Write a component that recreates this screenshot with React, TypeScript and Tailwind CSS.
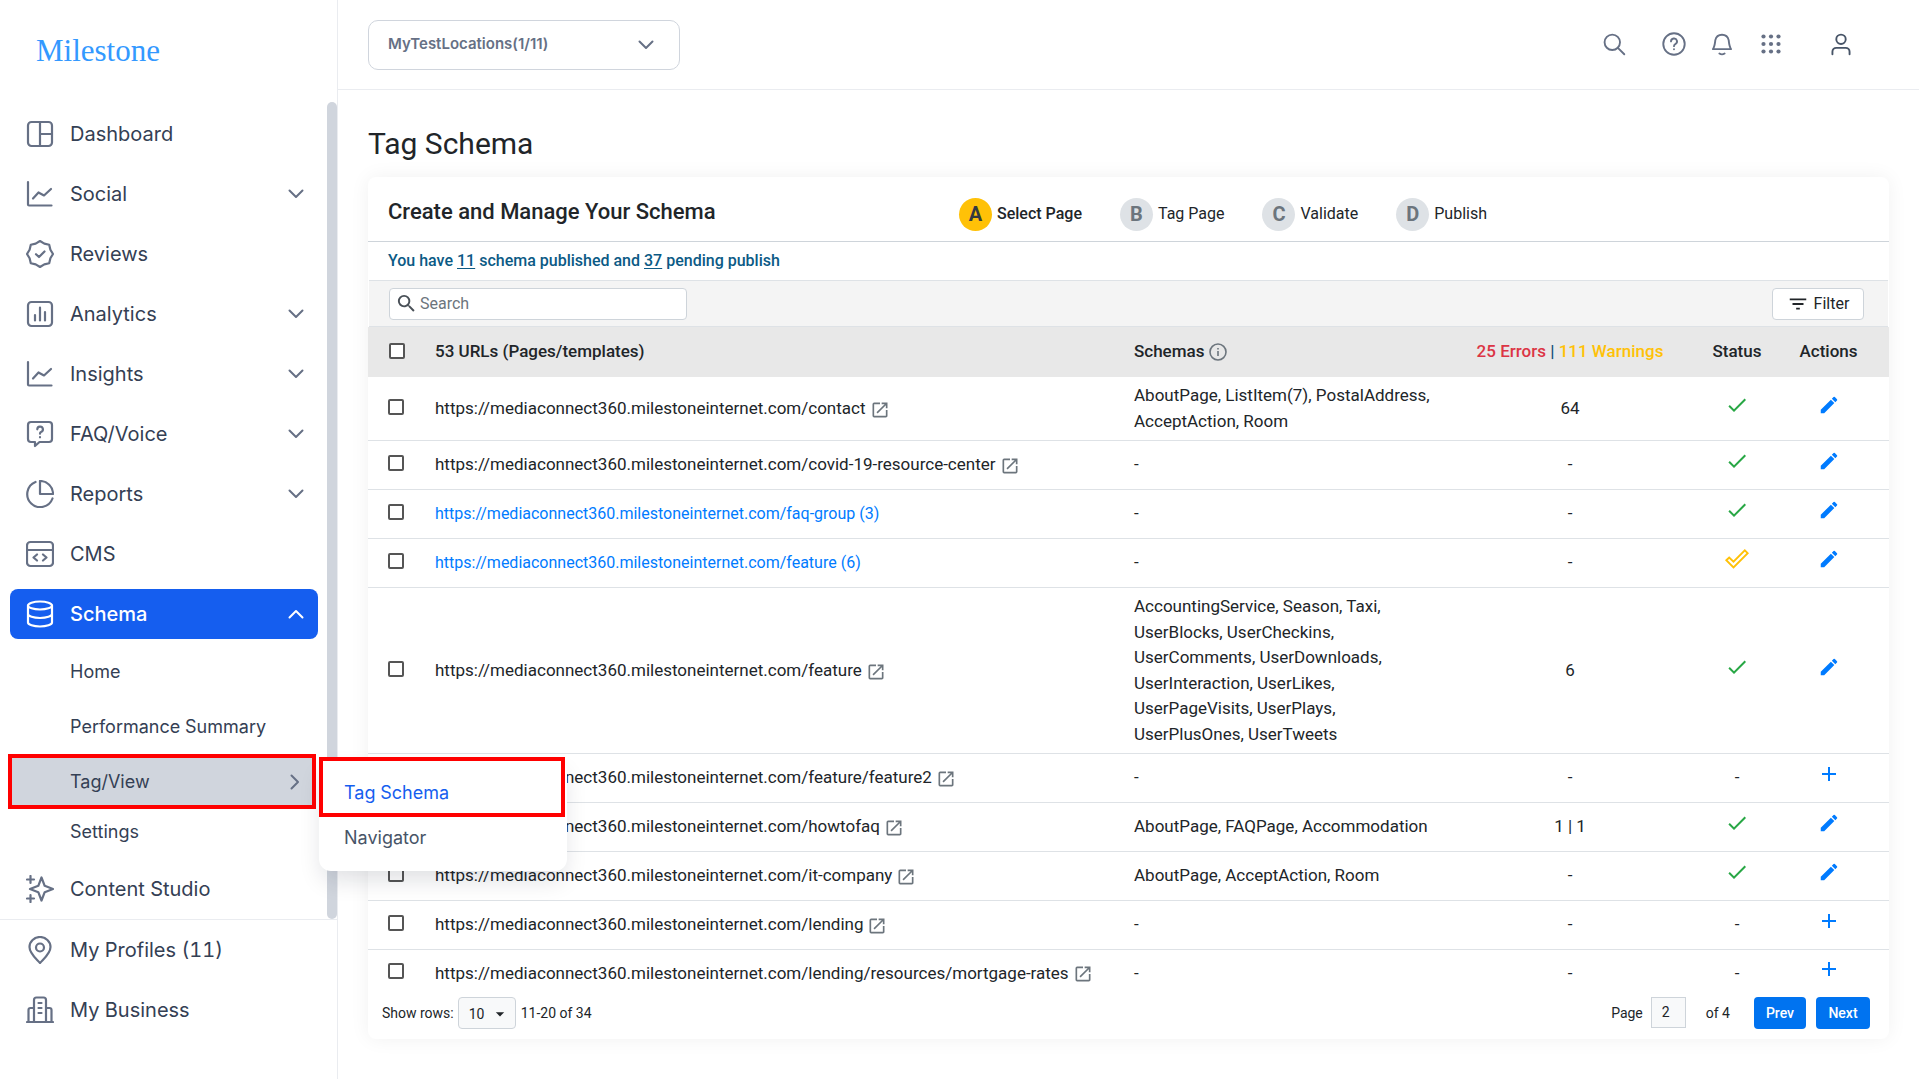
import { useState } from "react";
import type { ReactNode } from "react";
import {
  MdCheck,
  MdEdit,
  MdFilterList,
  MdOpenInNew,
  MdSearch,
  MdAdd,
  MdArrowDropDown,
} from "react-icons/md";

type navItemType = {
  title: string;
  icon: ReactNode;
  expandable?: boolean;
};

type statusType = "PUBLISHED" | "PENDING" | "NONE";

type rowType = {
  url: string;
  count?: number;
  schemas?: string;
  issues?: string;
  status: statusType;
};

const SITE_ADDRESS = "https://mediaconnect360.milestoneinternet.com/";

const StrokeIcon = ({ children, size = "size-7" }: { children: ReactNode; size?: string }) => (
  <svg
    viewBox="0 0 28 28"
    className={`${size} shrink-0`}
    fill="none"
    stroke="currentColor"
    strokeWidth="2.2"
    strokeLinecap="round"
    strokeLinejoin="round"
    aria-hidden="true"
  >
    {children}
  </svg>
);

const chartIcon = (
  <StrokeIcon>
    <path d="M2 2v22.500a1 1 0 0 0 1 1h22.500M7 18.500l5.500-6 5.500 3L25 9" />
  </StrokeIcon>
);

const navItems: navItemType[] = [
  {
    title: "Dashboard",
    icon: (
      <StrokeIcon>
        <rect x="2" y="2" width="24" height="24" rx="3.500" />
        <path d="M14 2v24M14 14h12" />
      </StrokeIcon>
    ),
  },
  { title: "Social", icon: chartIcon, expandable: true },
  {
    title: "Reviews",
    icon: (
      <StrokeIcon>
        <path d="M14 1l4.300 2.600 4.900 1.200 1.200 4.900L27 14l-2.600 4.300-1.200 4.900-4.900 1.200L14 27l-4.300-2.600-4.900-1.200-1.200-4.900L1 14l2.600-4.300 1.200-4.900 4.900-1.200z" />
        <path d="M10 14.200l3 2.800 5.500-5.500" />
      </StrokeIcon>
    ),
  },
  {
    title: "Analytics",
    icon: (
      <StrokeIcon>
        <rect x="2" y="2" width="24" height="24" rx="3.500" />
        <path d="M9 15v5.500M14 7.500v13M19 12v8.500" />
      </StrokeIcon>
    ),
    expandable: true,
  },
  { title: "Insights", icon: chartIcon, expandable: true },
  {
    title: "FAQ/Voice",
    icon: (
      <StrokeIcon>
        <path d="M5 2h18a3 3 0 0 1 3 3v14a3 3 0 0 1-3 3H13.500L9 26v-4H5a3 3 0 0 1-3-3V5a3 3 0 0 1 3-3z" />
        <path d="M11.300 9.300a2.800 2.800 0 1 1 3.700 2.700c-.700.300-1 .700-1 1.700M14 17.200v.100" />
      </StrokeIcon>
    ),
    expandable: true,
  },
  {
    title: "Reports",
    icon: (
      <StrokeIcon>
        <path d="M9.500 2a13 13 0 1 0 17 16.500" />
        <path d="M14 1a13 13 0 0 1 13 13H14z" />
      </StrokeIcon>
    ),
    expandable: true,
  },
  {
    title: "CMS",
    icon: (
      <StrokeIcon>
        <rect x="1" y="2" width="26" height="24" rx="3.500" />
        <path d="M1 10h26M11 14.500l-3.500 3 3.500 3M17 14.500l3.500 3-3.500 3" />
      </StrokeIcon>
    ),
  },
];

const rows: rowType[] = [
  {
    url: "contact",
    schemas: "AboutPage, ListItem(7), PostalAddress, AcceptAction, Room",
    issues: "64",
    status: "PUBLISHED",
  },
  { url: "covid-19-resource-center", status: "PUBLISHED" },
  { url: "faq-group", count: 3, status: "PUBLISHED" },
  { url: "feature", count: 6, status: "PENDING" },
  {
    url: "feature",
    schemas:
      "AccountingService, Season, Taxi, UserBlocks, UserCheckins, UserComments, UserDownloads, UserInteraction, UserLikes, UserPageVisits, UserPlays, UserPlusOnes, UserTweets",
    issues: "6",
    status: "PUBLISHED",
  },
  { url: "feature/feature2", status: "NONE" },
  {
    url: "howtofaq",
    schemas: "AboutPage, FAQPage, Accommodation",
    issues: "1 | 1",
    status: "PUBLISHED",
  },
  {
    url: "it-company",
    schemas: "AboutPage, AcceptAction, Room",
    status: "PUBLISHED",
  },
  { url: "lending", status: "NONE" },
  { url: "lending/resources/mortgage-rates", status: "NONE" },
];

const steps = [
  { letter: "A", title: "Select Page" },
  { letter: "B", title: "Tag Page" },
  { letter: "C", title: "Validate" },
  { letter: "D", title: "Publish" },
];

const Chevron = ({ className = "" }: { className?: string }) => (
  <svg
    viewBox="0 0 16 16"
    className={`size-4 ${className}`}
    fill="none"
    stroke="currentColor"
    strokeWidth="2"
    strokeLinecap="round"
    strokeLinejoin="round"
    aria-hidden="true"
  >
    <path d="M1.500 4.500L8 11l6.500-6.500" />
  </svg>
);

const Logo = () => (
  <a
    href="#"
    className="ml-9 text-[31px] leading-[44px] text-[#3399ff] font-['Liberation_Serif',serif]"
  >
    Milestone
  </a>
);

const NavLink = ({ title, icon, expandable }: navItemType) => (
  <li>
    <a
      href="#"
      className="flex h-[50px] items-center rounded-lg pl-4 pr-[14px] text-[#344054]"
    >
      <span className="text-[#667085]">{icon}</span>
      <span className="ml-4 flex-1">{title}</span>
      {expandable && <Chevron className="text-[#667085]" />}
    </a>
  </li>
);

const TagViewMenu = () => (
  <div className="absolute left-full top-0 z-10 ml-[3px] mt-[3px] w-[248px] rounded-xl bg-white pb-3 shadow-[0_12px_24px_-4px_rgba(16,24,40,0.14)]">
    <a
      href="#"
      className="flex h-[60px] w-[246px] items-end border-4 border-[#ff0000] pb-[6px] pl-[21px] leading-7 text-[#155eef]"
    >
      Tag Schema
    </a>
    <a href="#" className="flex h-[42px] items-center pl-[25px] text-[#475467]">
      Navigator
    </a>
  </div>
);

const Sidebar = () => (
  <aside className="flex w-[338px] shrink-0 flex-col border-r border-[#eaecf0] text-xl tabular-nums font-['Inter',sans-serif]">
    <div className="flex h-[102px] items-center">
      <Logo />
    </div>
    <div className="flex border-b border-[#eaecf0]">
      <nav className="flex-1 pb-[5px] pl-[10px] pr-[9px] pt-[7px]">
        <ul className="flex flex-col gap-[10px]">
          {navItems.map((data) => (
            <NavLink key={data.title} {...data} />
          ))}
          <li>
            <a
              href="#"
              className="flex h-[50px] items-center rounded-lg bg-[#155eef] pl-4 pr-[14px] font-medium text-white"
            >
              <StrokeIcon>
                <ellipse cx="14" cy="5.500" rx="12" ry="4" />
                <path d="M2 5.500v17c0 2.200 5.400 4 12 4s12-1.800 12-4v-17M2 14c0 2.200 5.400 4 12 4s12-1.800 12-4" />
              </StrokeIcon>
              <span className="ml-4 flex-1">Schema</span>
              <Chevron className="rotate-180" />
            </a>
            <ul className="pt-[5px] text-lg text-[#344054]">
              <li>
                <a href="#" className="flex h-[55px] items-center pl-[60px]">
                  Home
                </a>
              </li>
              <li>
                <a href="#" className="flex h-[55px] items-center pl-[60px]">
                  Performance Summary
                </a>
              </li>
              <li className="relative -ml-[2px] mr-[2px]">
                <a
                  href="#"
                  className="flex h-[55px] items-center border-4 border-[#ff0000] bg-[#d0d5dd] pl-[58px] pr-[9px]"
                >
                  <span className="flex-1">Tag/View</span>
                  <Chevron className="-rotate-90 text-[#667085]" />
                </a>
                <TagViewMenu />
              </li>
              <li>
                <a href="#" className="flex h-[45px] items-center pl-[60px]">
                  Settings
                </a>
              </li>
            </ul>
          </li>
          <NavLink
            title="Content Studio"
            icon={
              <StrokeIcon>
                <path d="M15.500 2.500l3.200 8.300 8.300 3.200-8.300 3.200-3.200 8.300-3.200-8.300L4 14l8.300-3.200zM4.500 1v7M1 4.500h7M4.500 20v7M1 23.500h7" />
              </StrokeIcon>
            }
          />
        </ul>
      </nav>
      <div className="w-[10px] rounded-full bg-[#d0d5dd]" />
    </div>
    <ul className="flex flex-col gap-[10px] px-[10px] pt-[5px]">
      <NavLink
        title="My Profiles (11)"
        icon={
          <StrokeIcon>
            <path d="M14 27C10 22.500 3.500 17.500 3.500 11a10.500 10 0 0 1 21 0C24.500 17.500 18 22.500 14 27z" />
            <circle cx="14" cy="11.500" r="4" />
          </StrokeIcon>
        }
      />
      <NavLink
        title="My Business"
        icon={
          <StrokeIcon>
            <path d="M1 26h26M8 26V4a2.500 2.500 0 0 1 2.500-2.500h7A2.500 2.500 0 0 1 20 4v22M8 12H4.500A2 2 0 0 0 2.500 14v12M20 12h3.500a2 2 0 0 1 2 2v12M12.500 7h3M12.500 12h3M12.500 17h3" />
          </StrokeIcon>
        }
      />
    </ul>
  </aside>
);

const TopBar = () => (
  <header className="flex h-[90px] items-center border-b border-[#eaecf0] pl-[30px] pr-[66px] text-[#667085]">
    <button className="flex h-[50px] w-[312px] items-center justify-between rounded-[10px] border border-[#d0d5dd] pl-[19px] pr-[25px] text-[15px] font-semibold font-['Inter',sans-serif]">
      MyTestLocations(1/11)
      <Chevron />
    </button>
    <div className="ml-auto flex items-center pb-px">
      <button aria-label="Search">
        <StrokeIcon size="size-6">
          <circle cx="12" cy="12" r="9" />
          <path d="M18.500 18.500L26 26" />
        </StrokeIcon>
      </button>
      <button aria-label="Help" className="ml-9">
        <StrokeIcon size="size-6">
          <circle cx="14" cy="14" r="12.500" />
          <path d="M10.500 11a3.500 3.500 0 1 1 5 3.200c-1 .500-1.500 1-1.500 2.300M14 20v.200" />
        </StrokeIcon>
      </button>
      <button aria-label="Notifications" className="ml-6">
        <StrokeIcon size="size-6">
          <path d="M3.500 20h21c-2-3-2.200-6-2.700-10.500a8 8 0 0 0-15.600 0C5.700 14 5.500 17 3.500 20zM11 25c1.800 1.300 4.200 1.300 6 0" />
        </StrokeIcon>
      </button>
      <button aria-label="Apps" className="ml-[25px]">
        <svg viewBox="0 0 24 24" className="size-6" fill="currentColor" aria-hidden="true">
          {[4.5, 12, 19.5].map((y) =>
            [4.5, 12, 19.5].map((x) => <circle key={`${x}-${y}`} cx={x} cy={y} r="2.1" />)
          )}
        </svg>
      </button>
      <button aria-label="Account" className="ml-[46px] text-[#475467]">
        <StrokeIcon size="size-6">
          <circle cx="14" cy="8.500" r="5.500" />
          <path d="M4 26v-3a4.500 4.500 0 0 1 4.500-4.500h11A4.500 4.500 0 0 1 24 23v3" />
        </StrokeIcon>
      </button>
    </div>
  </header>
);

const Checkbox = ({ label }: { label: string }) => (
  <input
    type="checkbox"
    aria-label={label}
    className="block size-4 appearance-none rounded-xs border-2 border-[#555] bg-white checked:bg-[#0075ff]"
  />
);

const StatusIcon = ({ status }: { status: statusType }) => {
  if (status === "PUBLISHED") {
    return <MdCheck className="mx-auto mb-2 size-6 text-[#28a745]" />;
  }
  if (status === "PENDING") {
    return (
      <svg
        viewBox="0 0 24 24"
        className="mx-auto mb-2 size-6"
        fill="none"
        stroke="#ffc107"
        strokeWidth="1.9"
        aria-hidden="true"
      >
        <path d="M1.300 13.300L4.200 10.500l4.300 4.200L19.800 3.300l2.900 2.900L8.500 20.400z" />
      </svg>
    );
  }
  return <>-</>;
};

const SchemaRow = ({ url, count, schemas, issues, status }: rowType) => {
  const address = SITE_ADDRESS + url;
  return (
    <tr className="h-[49px] border-b border-[#dee2e6] last:h-[47px] last:border-b-0">
      <td className="pb-1 pl-5">
        <Checkbox label={`Select ${address}`} />
      </td>
      <td>
        {count ? (
          <a href="#" className="text-base text-[#007bff]">
            {address} ({count})
          </a>
        ) : (
          <span className="flex items-center gap-1">
            {address}
            <a href="#" aria-label={`Open ${address}`} className="mt-[2px] text-[#6c757d]">
              <MdOpenInNew className="size-5" />
            </a>
          </span>
        )}
      </td>
      <td className="py-[6px]">{schemas ?? "-"}</td>
      <td className="text-center">{issues ?? "-"}</td>
      <td className="text-center">
        <StatusIcon status={status} />
      </td>
      <td className="pb-2">
        <button
          aria-label={status === "NONE" ? "Add schema" : "Edit schema"}
          className="mx-auto block text-[#007bff]"
        >
          {status === "NONE" ? <MdAdd className="size-6" /> : <MdEdit className="size-[22px]" />}
        </button>
      </td>
    </tr>
  );
};

const SchemaTable = () => (
  <table className="w-full table-fixed text-left text-[17px] leading-normal">
    <colgroup>
      <col className="w-[67px]" />
      <col />
      <col className="w-[300px]" />
      <col className="w-[272px]" />
      <col className="w-[62px]" />
      <col className="w-[121px]" />
    </colgroup>
    <thead className="bg-[#e8e8e8]">
      <tr className="h-[50px]">
        <th className="pb-[2px] pl-[21px]">
          <Checkbox label="Select all pages" />
        </th>
        <th className="font-medium">53 URLs (Pages/templates)</th>
        <th className="font-medium">
          <span className="flex items-center gap-1">
            Schemas
            <svg
              viewBox="0 0 20 20"
              className="size-5 text-[#6c757d]"
              fill="none"
              stroke="currentColor"
              strokeWidth="1.6"
              aria-hidden="true"
            >
              <circle cx="10" cy="10" r="8" />
              <path d="M10 9v5M10 6v1.500" />
            </svg>
          </span>
        </th>
        <th className="whitespace-nowrap text-center font-medium text-[#0b4f79]">
          <span className="text-[#dc3545]">25 Errors</span> |{" "}
          <span className="text-[#ffc107]">111 Warnings</span>
        </th>
        <th className="text-center font-medium">Status</th>
        <th className="text-center font-medium">Actions</th>
      </tr>
    </thead>
    <tbody>
      {rows.map((data) => (
        <SchemaRow key={data.url + (data.count ?? "")} {...data} />
      ))}
    </tbody>
  </table>
);

const TableFooter = () => {
  let [page, setPage] = useState("2");
  return (
    <div className="flex h-[42px] items-start pl-[14px] pr-[19px] text-sm leading-8">
      <label htmlFor="row-count">Show rows:</label>
      <div className="relative ml-1 mr-[5px]">
        <select
          id="row-count"
          className="block h-8 w-[58px] appearance-none rounded border border-[#ced4da] bg-[#f8f9fa] pl-[10px]"
        >
          <option>10</option>
          <option>20</option>
          <option>50</option>
        </select>
        <MdArrowDropDown className="pointer-events-none absolute right-[6px] top-[7px] size-5" />
      </div>
      <span>11-20 of 34</span>
      <label htmlFor="page-number" className="ml-auto">
        Page
      </label>
      <input
        id="page-number"
        value={page}
        onChange={(e) => setPage(e.target.value)}
        className="ml-2 h-[31px] w-[35px] border border-[#ced4da] bg-[#f8f9fa] pl-[10px]"
      />
      <span className="ml-5">of 4</span>
      <button className="ml-6 h-8 w-[52px] rounded bg-[#0073f0] font-medium text-white">Prev</button>
      <button className="ml-[10px] h-8 w-[54px] rounded bg-[#0073f0] font-medium text-white">
        Next
      </button>
    </div>
  );
};

const App = () => {
  return (
    <div className="flex min-h-screen bg-white text-base text-[#212529] font-['Roboto',sans-serif]">
      <Sidebar />
      <div className="min-w-0 flex-1">
        <TopBar />
        <main className="px-[30px] pt-9">
          <h1 className="text-3xl">Tag Schema</h1>
          <section className="mt-[15px] rounded-lg bg-white shadow-[0_0_20px_rgba(0,0,0,0.06)]">
            <div className="flex h-[65px] items-center border-b border-[#ced4da] pl-5">
              <h2 className="flex-1 pt-1 text-[22px] font-medium">Create and Manage Your Schema</h2>
              <ol className="mr-[402px] mt-[10px] flex gap-[38px]">
                {steps.map(({ letter, title }, index) => (
                  <li key={letter} className="flex items-center gap-[5px]">
                    <span
                      className={
                        index === 0
                          ? "flex size-[33px] items-center justify-center rounded-full bg-[#ffc107] text-xl font-bold text-[#343a40]"
                          : "flex size-[33px] items-center justify-center rounded-full bg-[#dee2e6] text-xl font-bold text-[#6c757d]"
                      }
                    >
                      {letter}
                    </span>
                    <span className={index === 0 ? "font-medium" : ""}>{title}</span>
                  </li>
                ))}
              </ol>
            </div>
            <p className="flex h-[38px] items-center whitespace-pre pl-5 font-medium text-[#0b5a85]">
              You have <a href="#" className="underline underline-offset-2">11</a> schema published and{" "}
              <a href="#" className="underline underline-offset-2">37</a> pending publish
            </p>
            <div className="mx-px flex h-[47px] items-center justify-between border-y border-[#dee2e6] bg-[#f4f4f4] pl-5 pr-6">
              <label className="flex h-8 w-[298px] items-center rounded border border-[#ced4da] bg-white pl-[5px]">
                <MdSearch className="size-[23px] shrink-0 text-[#495057]" />
                <input
                  placeholder="Search"
                  aria-label="Search pages"
                  className="ml-[2px] min-w-0 flex-1 outline-none placeholder:text-[#6c757d]"
                />
              </label>
              <button className="flex h-8 w-[92px] items-center justify-center gap-[5px] rounded border border-[#ced4da] bg-white">
                <MdFilterList className="size-[22px]" />
                Filter
              </button>
            </div>
            <SchemaTable />
            <TableFooter />
          </section>
        </main>
      </div>
    </div>
  );
};

export default App;
